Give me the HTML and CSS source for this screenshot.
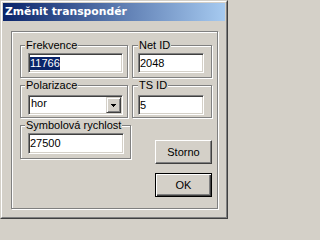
FILE: index.html
```html
<!DOCTYPE html>
<html lang="cs">
<head>
<meta charset="utf-8">
<title>Změnit transpondér</title>
<link rel="stylesheet" href="styles.css">
</head>
<body>
<div class="window">
  <div class="window-inner">
    <div class="titlebar">Změnit transpondér</div>
    <div class="client">
      <div class="frame">
        <div class="grid">
          <fieldset class="group group-left row1">
            <legend>Frekvence</legend>
            <div class="edit"><span class="sel">11766</span></div>
          </fieldset>
          <fieldset class="group group-right row1">
            <legend>Net ID</legend>
            <div class="edit">2048</div>
          </fieldset>
          <fieldset class="group group-left row2">
            <legend>Polarizace</legend>
            <div class="combo">
              <span class="combo-text">hor</span>
              <span class="combo-btn"><svg width="5" height="3" viewBox="0 0 5 3" shape-rendering="crispEdges"><path d="M0 0H5V1H4V2H3V3H2V2H1V1H0Z" fill="#000"/></svg></span>
            </div>
          </fieldset>
          <fieldset class="group group-right row2">
            <legend>TS ID</legend>
            <div class="edit">5</div>
          </fieldset>
        </div>
        <div class="bottom">
          <fieldset class="group group-wide row1">
            <legend>Symbolová rychlost</legend>
            <div class="edit edit-tall">27500</div>
          </fieldset>
          <div class="buttons">
            <button class="btn" type="button">Storno</button>
            <button class="btn btn-default" type="button">OK</button>
          </div>
        </div>
      </div>
    </div>
  </div>
</div>
</body>
</html>
```
FILE: styles.css
```css
html, body {
  margin: 0;
  padding: 0;
}
body {
  width: 228px;
  height: 219px;
  overflow: hidden;
  background: #d4d0c8;
  font-family: "Liberation Sans", Arial, sans-serif;
  font-size: 11px;
  color: #000;
}
.window {
  box-sizing: border-box;
  width: 228px;
  height: 219px;
  border: 1px solid;
  border-color: #d4d0c8 #404040 #404040 #d4d0c8;
}
.window-inner {
  box-sizing: border-box;
  height: 100%;
  border: 1px solid;
  border-color: #fff #808080 #808080 #fff;
  padding: 1px;
  display: flex;
  flex-direction: column;
}
.titlebar {
  height: 18px;
  padding-left: 2px;
  background: linear-gradient(to right, #0a246a, #a6caf0);
  color: #fff;
  font: bold 10.8px/18px "DejaVu Sans", sans-serif;
  white-space: nowrap;
}
.client {
  flex: 1;
  padding: 10px 7px 0 8px;
}
.frame {
  box-sizing: border-box;
  height: 178px;
  border: 1px solid #808080;
  box-shadow: inset 1px 1px 0 #fff, 1px 1px 0 #fff;
  padding: 7px 5px 0 8px;
}
.grid {
  display: grid;
  grid-template-columns: 108px 80px;
  column-gap: 4px;
  row-gap: 1px;
}
.group {
  box-sizing: border-box;
  margin: 0;
  min-width: 0;
  border: 1px solid #808080;
  box-shadow: inset 1px 1px 0 #fff, 1px 1px 0 #fff;
}
.group legend {
  padding: 0 1px;
  height: 13px;
  line-height: 13px;
  font-size: 11px;
  background: #d4d0c8;
  white-space: nowrap;
}
.group-left {
  padding-left: 7px;
  padding-right: 4px;
}
.group-left legend,
.group-wide legend {
  margin-left: -3px;
}
.group-right {
  padding-left: 5px;
  padding-right: 7px;
}
.group-wide {
  width: 111px;
  padding-left: 7px;
  padding-right: 6px;
}
.row1 {
  padding-top: 1px;
  padding-bottom: 4px;
}
.row2 {
  padding-top: 3px;
  padding-bottom: 2px;
}
.edit {
  box-sizing: border-box;
  height: 20px;
  background: #fff;
  border: 1px solid;
  border-color: #808080 #fff #fff #808080;
  box-shadow: inset 1px 1px 0 #404040, inset -1px -1px 0 #d4d0c8;
  padding: 3px 0 0 1px;
  line-height: 13px;
  white-space: nowrap;
}
.edit-tall {
  height: 21px;
}
.sel {
  display: inline-block;
  line-height: 13px;
  background: #0a246a;
  color: #fff;
}
.combo {
  box-sizing: border-box;
  height: 20px;
  display: flex;
  background: #fff;
  border: 1px solid;
  border-color: #808080 #fff #fff #808080;
  box-shadow: inset 1px 1px 0 #404040, inset -1px -1px 0 #d4d0c8;
  padding: 1px;
}
.combo-text {
  flex: 1;
  padding-left: 1px;
  line-height: 13px;
}
.combo-btn {
  box-sizing: border-box;
  width: 15px;
  display: flex;
  align-items: center;
  justify-content: center;
  background: #d4d0c8;
  border: 1px solid;
  border-color: #d4d0c8 #404040 #404040 #d4d0c8;
  box-shadow: inset 1px 1px 0 #fff, inset -1px -1px 0 #808080;
}
.combo-btn svg {
  display: block;
}
.bottom {
  display: flex;
  align-items: flex-start;
  margin-top: 1px;
}
.buttons {
  display: flex;
  flex-direction: column;
  gap: 9px;
  margin-left: 24px;
  padding-top: 21px;
}
.btn {
  box-sizing: border-box;
  width: 57px;
  height: 24px;
  margin: 0;
  padding: 0;
  font: 11px "Liberation Sans", Arial, sans-serif;
  color: #000;
  background: #d4d0c8;
  border: 1px solid;
  border-color: #fff #404040 #404040 #fff;
  box-shadow: inset -1px -1px 0 #808080;
}
.btn-default {
  border-color: #000;
  box-shadow: inset 1px 1px 0 #fff, inset -1px -1px 0 #404040, inset -2px -2px 0 #808080;
}
```
